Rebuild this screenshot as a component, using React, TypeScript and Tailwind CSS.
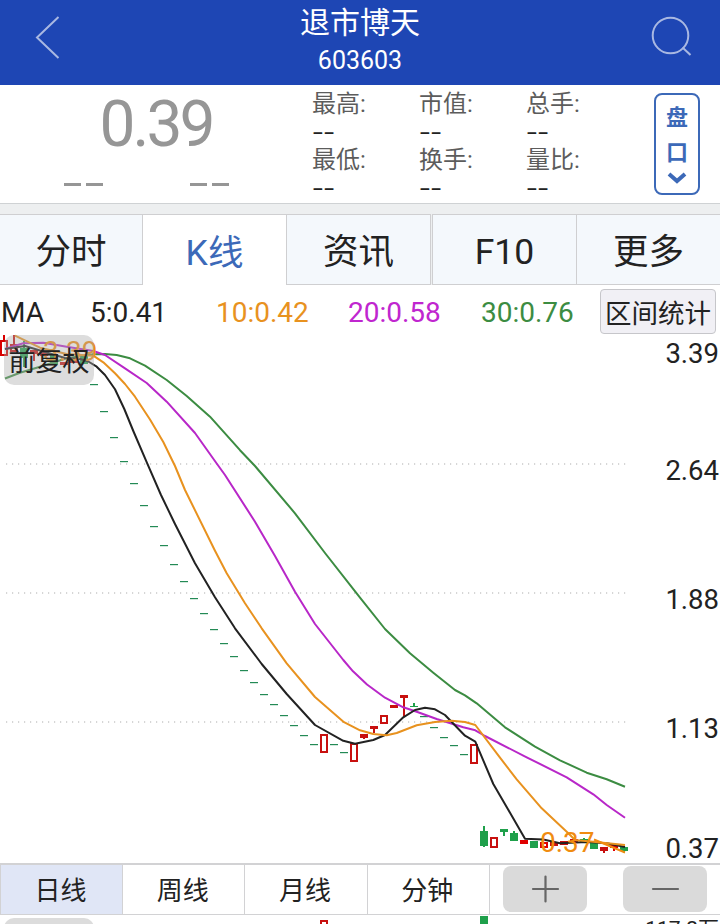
import React, { useState } from 'react';

interface Candle {
  x: number;
  top: number;
  bottom: number;
  high?: number;
  low?: number;
  color: string;
  hollow?: boolean;
}

const RED = '#c8100f';
const GREEN = '#1fa04b';

const quotes = [
  { label: '最高:', value: '--' },
  { label: '市值:', value: '--' },
  { label: '总手:', value: '--' },
  { label: '最低:', value: '--' },
  { label: '换手:', value: '--' },
  { label: '量比:', value: '--' },
];

const tabs = [
  { name: '分时', className: 'w-[143px]' },
  { name: 'K线', className: 'w-[144px]' },
  { name: '资讯', className: 'w-[144px]' },
  { name: 'F10', className: 'ml-px w-[145px] border-l' },
  { name: '更多', className: 'w-[143px] border-r-0' },
];
const periods = ['日线', '周线', '月线', '分钟'];

const averages = [
  { label: '5:0.41', className: 'left-[90px] text-[#222]' },
  { label: '10:0.42', className: 'left-[216px] text-[#e8921f]' },
  { label: '20:0.58', className: 'left-[348px] text-[#c026cf]' },
  { label: '30:0.76', className: 'left-[481px] text-[#3c8c42]' },
];

// limit-down days, drawn as a flat tick: [x, y]
const flatDays: [number, number][] = [
  [94, 384.5], [104, 411.5], [114, 437.5], [124, 461.5], [134, 483.5], [144, 505.5],
  [154, 526.5], [164, 545.5], [174, 564.5], [184, 581.5], [194, 598.5], [204, 613.5],
  [214, 629.5], [224, 643.5], [234, 656.5], [244, 670.5], [254, 682.5], [264, 694.5],
  [274, 704.5], [284, 715.5], [294, 725.5], [304, 735.5], [314, 744.5], [334, 744.5],
  [344, 752.5], [424, 716.5], [434, 727.5], [444, 737.5], [454, 745.5], [464, 754.5],
];

const candles: Candle[] = [
  { x: 4, top: 340, bottom: 356, high: 335, color: '#d80000', hollow: true },
  { x: 14, top: 344, bottom: 352, high: 335, color: RED, hollow: true },
  { x: 24, top: 348, bottom: 358, high: 341, low: 367, color: GREEN },
  { x: 34, top: 350, bottom: 354, low: 361, color: RED },
  { x: 44, top: 351, bottom: 356, color: RED },
  { x: 54, top: 354, bottom: 365, color: GREEN },
  { x: 64, top: 362, bottom: 365, color: RED },
  { x: 74, top: 359, bottom: 363, color: RED },
  { x: 84, top: 356, bottom: 364, color: GREEN },
  { x: 324, top: 734, bottom: 753, color: RED, hollow: true },
  { x: 354, top: 743, bottom: 762, color: RED, hollow: true },
  { x: 364, top: 734, bottom: 738, low: 739, color: RED },
  { x: 374, top: 726, bottom: 729, low: 733, color: RED },
  { x: 384, top: 715, bottom: 724, color: RED, hollow: true },
  { x: 394, top: 705, bottom: 708, color: RED },
  { x: 404, top: 695, bottom: 698, low: 717, color: RED },
  { x: 414, top: 706, bottom: 707, high: 703, color: GREEN },
  { x: 474, top: 744, bottom: 764, color: RED, hollow: true },
  { x: 484, top: 831, bottom: 846, high: 826, low: 847, color: GREEN },
  { x: 494, top: 837, bottom: 848, color: RED, hollow: true },
  { x: 504, top: 829, bottom: 832, low: 836, color: GREEN },
  { x: 514, top: 833, bottom: 841, high: 831, color: GREEN },
  { x: 524, top: 840, bottom: 844, color: '#e00000' },
  { x: 534, top: 841, bottom: 848, color: GREEN },
  { x: 544, top: 842, bottom: 848, color: '#e00000', hollow: true },
  { x: 554, top: 842, bottom: 846, color: RED },
  { x: 564, top: 841, bottom: 845, color: RED },
  { x: 574, top: 839, bottom: 842, color: RED },
  { x: 584, top: 839, bottom: 842, high: 838, color: GREEN },
  { x: 594, top: 842, bottom: 849, color: GREEN },
  { x: 604, top: 847, bottom: 851, low: 853, color: RED },
  { x: 614, top: 845, bottom: 848, low: 851, color: '#e00000' },
  { x: 624, top: 847, bottom: 851, low: 853, color: GREEN },
];

const lines = [
  {
    color: '#3c8c42',
    points:
      '5,378.5 20,372.7 40,366.7 66.7,358.3 93.3,354.3 105,354 116.7,355 130,358.3 145,365.7 166.7,380 186.7,396 210,416.7 240,450.2 255,466 295,513.3 325,553 360,597.7 385,629 410,653.3 433.3,672.7 455,690 465,695.3 476.7,703.3 505,727.3 535,746.7 560,760.3 586.7,772.7 606.7,779.3 625,786.7',
  },
  {
    color: '#b827c8',
    points:
      '5,349 23.3,343.3 43.3,342.7 66.7,346.7 93.3,351 105,355 125,368.3 146.7,383 166.7,401.7 195,433 216.7,463.5 225,475 255,521.7 275,556 295,591.7 315,624 343.3,660 353,671.3 367,684.5 385,697.7 403.3,707.3 416.7,711.7 436.7,719 463.3,727.3 475.3,730.3 485,736 526.7,757.3 566.7,777.3 593.3,794.3 606.7,805 625,817.7',
  },
  {
    color: '#222222',
    points:
      '5,349 25,346 45,352 65,358 80,359 88.3,361.5 96.7,366.7 105,375 115,389.3 124.3,409 133.3,431 147,462.8 161,495 175,524 195,563.3 215,597.3 235,628.3 261.7,664 286.7,694 315,725 343.3,740.8 355,743.7 373.3,740 385,735 403.3,717.3 415,710 425,707.7 435,709.3 445,715 465,735.7 475.3,741.7 493.3,784 525,838.7 543.3,839.5 560,843.3 586.7,842 606.7,843.3 625,847',
  },
  {
    color: '#e8921f',
    points:
      '15,335.7 40,347.7 66.7,354 93.3,355.7 103.3,362.3 115,373.3 125,384 135,396.7 150,419.5 163.3,442 175,466 185,490 215,550.7 226.7,573.3 245,603.3 261.7,628.3 286.7,663.3 315,697 344,722.2 360,730.3 373.3,734 386.7,735.3 396.7,733 416.7,725.3 435,722 451.7,720.7 465,722 475.3,725 500,757.7 516.7,779.3 541.7,808.3 568.3,833.3 575,840 593,841.7 625,845',
  },
];

const Stick: React.FC<{ candle: Candle }> = ({ candle }) => {
  const { x, top, bottom, high = top, low = bottom, color, hollow } = candle;
  return (
    <g>
      {high < top && <rect x={x - 1} y={high} width={2} height={top - high} fill={color} />}
      {low > bottom && <rect x={x - 1} y={bottom} width={2} height={low - bottom} fill={color} />}
      {hollow ? (
        <rect x={x - 3} y={top + 1} width={6} height={bottom - top - 2} fill="#fff" stroke={color} strokeWidth={2} />
      ) : (
        <rect x={x - 4} y={top} width={8} height={bottom - top} fill={color} />
      )}
    </g>
  );
};

const KLineChart: React.FC = () => (
  <svg viewBox="0 334 720 529" className="block h-[529px] w-[720px]">
    {[464, 593, 722].map(y => (
      <line key={y} x1={6} x2={626} y1={y} y2={y} stroke="#c9c9c9" strokeWidth={1.4} strokeDasharray="1.2 4.8" />
    ))}
    {flatDays.map(([x, y]) => (
      <rect key={x} x={x - 4} y={y - 0.5} width={8} height={1.2} fill="#238a55" />
    ))}
    {candles.map(candle => (
      <Stick key={candle.x} candle={candle} />
    ))}
    {lines.map(line => (
      <polyline key={line.color} points={line.points} fill="none" stroke={line.color} strokeWidth={2} strokeLinejoin="round" />
    ))}
    <g fill="#f08c10" fontSize={28}>
      <text x={43} y={361}>3.39</text>
      <text x={540} y={852}>0.37</text>
    </g>
    <path d="M594 839.500L625 852.500" stroke="#f08c10" strokeWidth={2} />
    <g fill="#222" fontSize={27.5} textAnchor="end">
      <text x={719} y={363}>3.39</text>
      <text x={719} y={480}>2.64</text>
      <text x={719} y={609}>1.88</text>
      <text x={719} y={738}>1.13</text>
      <text x={719} y={858}>0.37</text>
    </g>
  </svg>
);

const App: React.FC = () => {
  const [tab, setTab] = useState('K线');
  const [period, setPeriod] = useState('日线');

  return (
    <div className="flex h-[924px] w-[720px] flex-col overflow-hidden bg-white font-[Roboto,'Noto_Sans_CJK_SC',sans-serif] text-[#222]">
      {/* Header */}
      <header className="flex h-[85px] shrink-0 items-start justify-between bg-[#1e46b4] text-white">
        <svg className="h-[85px] w-[100px]" viewBox="0 0 100 85" fill="none" stroke="#a9b8e2" strokeWidth={2}>
          <path d="M58.500 17L37 37.500L58.500 58" />
        </svg>
        <div className="flex flex-col items-center">
          <h1 className="mt-[4px] text-[30px] leading-[38px]">退市博天</h1>
          <p className="mt-[4px] text-[25px] leading-[30px]">603603</p>
        </div>
        <svg className="h-[85px] w-[100px]" viewBox="620 0 100 85" fill="none" stroke="#a9b8e2" strokeWidth={2}>
          <circle cx={670.5} cy={35.5} r={17.8} />
          <path d="M682.500 47.500L690.500 55" />
        </svg>
      </header>

      {/* Quote */}
      <section className="flex h-[119px] shrink-0 border-b border-[#cfd2d4]">
        <div className="flex w-[312px] flex-col items-center text-[#969696]">
          <p className="mt-[9px] text-[64px] leading-[62px] tracking-[-3px]">0.39</p>
          <div className="mt-[27px] flex w-full gap-[87px] pl-[64px]">
            {[0, 1].map(i => (
              <div key={i} className="flex gap-[5px]">
                <span className="h-[3px] w-[17px] bg-[#969696]" />
                <span className="h-[3px] w-[17px] bg-[#969696]" />
              </div>
            ))}
          </div>
        </div>
        <div className="grid w-[342px] grid-cols-[107px_107px_107px] grid-rows-[56px_56px]">
          {quotes.map(quote => (
            <div key={quote.label} className="pt-[5px]">
              <p className="text-[24px] leading-[28px] text-[#5c5c5c]">{quote.label}</p>
              <p className="font-['Noto_Sans_CJK_SC',sans-serif] text-[35px] font-light leading-[20px] tracking-[-0.5px]">{quote.value}</p>
            </div>
          ))}
        </div>
        <button className="mt-2 flex h-[102px] w-[46px] flex-col items-center rounded-lg border-2 border-[#3c69b8] text-[22px] font-bold leading-[35px] text-[#3c69b8]">
          <span className="mt-[5px]">盘</span>
          <span>口</span>
          <svg className="mt-[2px] h-[12px] w-[20px] shrink-0" viewBox="0 0 20 12" fill="none" stroke="currentColor" strokeWidth={4}>
            <path d="M2 2L10 9L18 2" />
          </svg>
        </button>
      </section>

      {/* Tabs */}
      <nav className="flex h-[81px] shrink-0 bg-[#edeff0] pt-[10px]">
        {tabs.map(({ name, className }) => (
          <button
            key={name}
            onClick={() => setTab(name)}
            className={`border-t border-[#cfcfd1] pt-[7px] text-[35.5px] leading-none ${className} ${
              className.includes('border-r-0') ? '' : 'border-r'
            } ${name === tab ? 'bg-white text-[#3c69b8]' : 'border-b bg-[#f4f8fc]'}`}
          >
            {name}
          </button>
        ))}
      </nav>

      {/* Moving averages */}
      <div className="relative h-[49px] shrink-0 text-[28px] leading-[56px]">
        <span className="absolute left-[1px]">MA</span>
        {averages.map(avg => (
          <span key={avg.label} className={`absolute ${avg.className}`}>
            {avg.label}
          </span>
        ))}
        <button className="absolute left-[600px] top-1 h-[45px] w-[116px] rounded-[4px] border border-[#c6c6ca] bg-[#f1f0f5] pt-[2px] text-[26.5px] leading-[43px]">
          区间统计
        </button>
      </div>

      {/* Chart */}
      <div className="relative h-[529px] shrink-0">
        <KLineChart />
        <button className="absolute left-[4px] top-[1px] h-[50px] w-[90px] rounded-[10px] bg-[#aaa]/40 pt-[5px] text-[27px] leading-[45px]">
          前复权
        </button>
      </div>

      {/* Periods */}
      <div className="flex h-[52px] shrink-0 border-b border-l border-t-2 border-[#d2d2d4]">
        {periods.map(name => (
          <button
            key={name}
            onClick={() => setPeriod(name)}
            className={`w-[122.2px] border-r border-[#d2d2d4] pr-[2px] pt-[3px] text-[26px] leading-none ${name === period ? 'bg-[#e0e6f6]' : ''}`}
          >
            {name}
          </button>
        ))}
        <div className="flex gap-[36px] pl-[13px] pt-[1px]">
          {['M33 23h25M45.5 10.5v25', 'M33 23h25'].map(d => (
            <button key={d} className="h-[46px] w-[84px] rounded-[8px] bg-[#dadada]">
              <svg className="h-[46px] w-[84px]" viewBox="3 0 84 46" fill="none" stroke="#666" strokeWidth={2.2} strokeLinecap="round">
                <path d={d} />
              </svg>
            </button>
          ))}
        </div>
      </div>

      {/* Volume */}
      <svg viewBox="0 915 720 9" className="h-[9px] w-[720px] shrink-0">
        <rect x={4} y={918} width={90} height={40} rx={10} fill="#dcdcdc" />
        <rect x={321} y={921} width={6} height={20} fill="#fff" stroke={RED} strokeWidth={2} />
        <rect x={480} y={916} width={8} height={20} fill={GREEN} />
        <text x={719} y={936} textAnchor="end" fontSize={21} fill="#222">117.2万</text>
      </svg>
    </div>
  );
};

export default App;
